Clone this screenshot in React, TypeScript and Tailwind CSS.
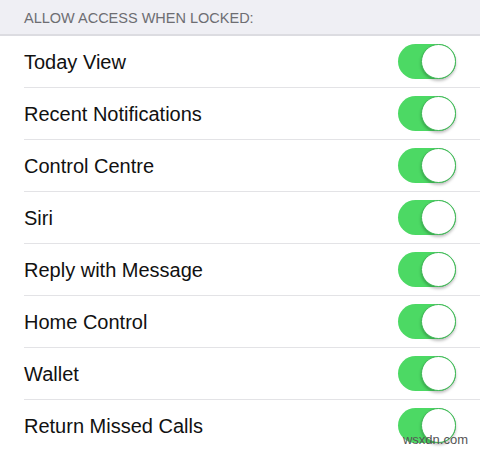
const items = [
  "Today View",
  "Recent Notifications",
  "Control Centre",
  "Siri",
  "Reply with Message",
  "Home Control",
  "Wallet",
  "Return Missed Calls",
];

const Toggle = () => (
  <span className="relative inline-flex h-[35px] w-[58px] shrink-0 items-center rounded-full bg-[#4cd964]">
    <span className="absolute right-0 top-0 h-[35px] w-[35px] rounded-full border border-[#3fb856] bg-white shadow-[0_2px_3px_rgba(0,0,0,0.25)]" />
  </span>
);

export default function App() {
  return (
    <div
      className="relative h-[451px] w-[480px] overflow-hidden bg-white"
      style={{ fontFamily: '"Liberation Sans", Arial, sans-serif' }}
    >
      <div className="flex h-[36px] items-center border-b-2 border-[#dcdce1] bg-[#efeff4] pl-6 pt-[4px] text-[14.5px] text-[#6d6d72]">
        ALLOW ACCESS WHEN LOCKED:
      </div>
      <ul className="m-0 list-none p-0 pl-6">
        {items.map((label) => (
          <li
            key={label}
            className="flex h-[52px] items-center justify-between border-b border-[#e3e3e6] pr-6"
          >
            <span className="text-[20px] text-[#111]">{label}</span>
            <Toggle />
          </li>
        ))}
      </ul>
      <span className="absolute bottom-[2px] right-[12px] text-[13px] text-[#555]">
        wsxdn.com
      </span>
    </div>
  );
}
